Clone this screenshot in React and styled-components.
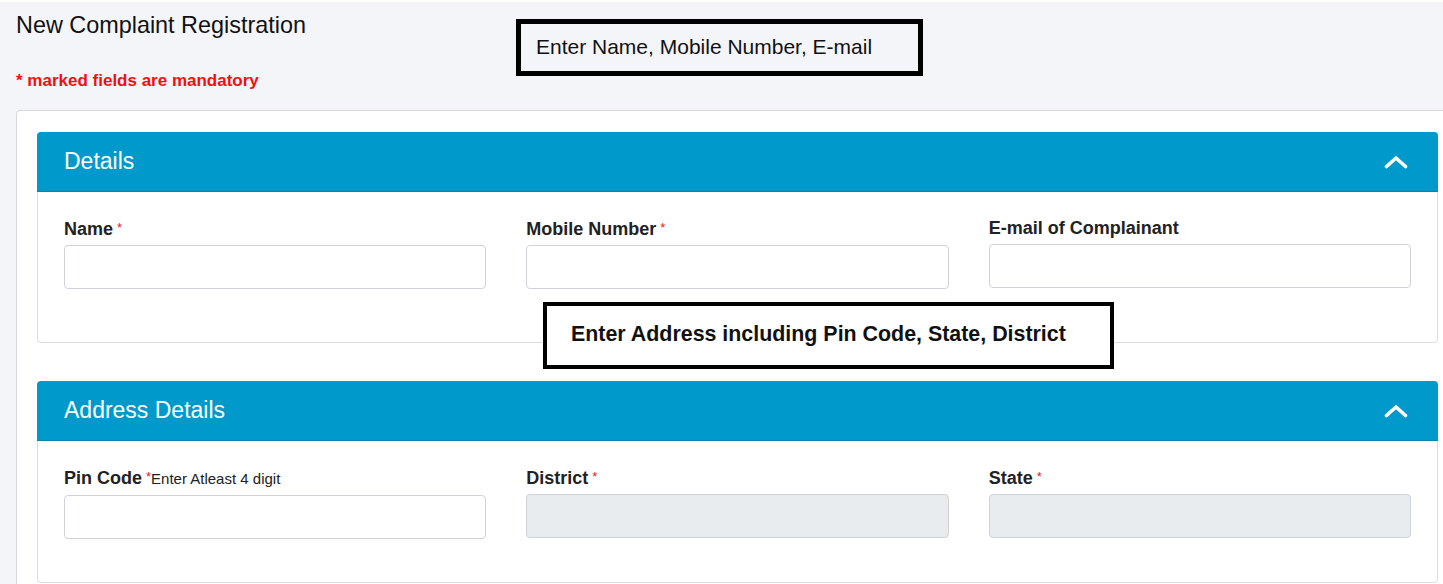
import styled, { createGlobalStyle } from "styled-components";

const GlobalStyle = createGlobalStyle`
  html, body {
    margin: 0;
    padding: 0;
    overflow: hidden;
    background: #f4f5f9;
    font-family: "Liberation Sans", Arial, sans-serif;
  }
`;

const Page = styled.div`
  position: relative;
  border-top: 2px solid #ffffff;
  padding: 10px 0 0 16px;
  height: 584px;
  overflow: hidden;
  box-sizing: border-box;
`;

const Title = styled.h1`
  margin: 0;
  font-size: 23.4px;
  line-height: 26px;
  font-weight: 400;
  color: #111111;
`;

const MandatoryNote = styled.p`
  margin: 33px 0 0;
  font-size: 17px;
  line-height: 20px;
  font-weight: 700;
  color: #ee1111;
`;

const Container = styled.div`
  margin-top: 19px;
  width: 1446px;
  background: #ffffff;
  border: 1px solid #d8d8dc;
  border-radius: 4px;
  padding: 21px 0 0 20px;
  box-sizing: border-box;
  min-height: 500px;
`;

const Card = styled.section`
  width: 1401px;
  border: 1px solid #dddddd;
  border-radius: 4px;
  background: #ffffff;
  box-sizing: border-box;
  & + & {
    margin-top: 38px;
  }
`;

const CardHeader = styled.header`
  height: 60px;
  margin: -1px -1px 0;
  padding: 0 30px 0 27px;
  background: #0099cc;
  border-bottom: 1px solid #0a84ae;
  border-radius: 4px 4px 0 0;
  display: flex;
  align-items: center;
  justify-content: space-between;
  box-sizing: border-box;
`;

const CardTitle = styled.h2`
  margin: 0;
  font-size: 23px;
  font-weight: 400;
  color: #ffffff;
`;

const CardBody = styled.div`
  padding: 26px 26px ${({ $bottom }) => $bottom}px;
  display: grid;
  grid-template-columns: repeat(3, 1fr);
  column-gap: 40px;
`;

const Field = styled.div`
  display: flex;
  flex-direction: column;
`;

const Label = styled.label`
  font-size: 18px;
  line-height: 20px;
  font-weight: 700;
  color: #222222;
  margin-bottom: 6px;
  white-space: nowrap;
`;

const Star = styled.span`
  color: #e01b1b;
  font-size: 13px;
  font-weight: 400;
  vertical-align: 3px;
  margin-left: 4px;
`;

const Hint = styled.span`
  font-size: 15px;
  font-weight: 400;
  color: #222222;
`;

const Input = styled.input`
  height: 44px;
  border: 1px solid #cfd2d6;
  border-radius: 4px;
  background: ${({ disabled }) => (disabled ? "#e9ecef" : "#ffffff")};
  box-sizing: border-box;
  padding: 0 12px;
  font-size: 16px;
  font-family: inherit;
`;

const Note = styled.div`
  position: absolute;
  box-sizing: border-box;
  border: 5px solid #000000;
  display: flex;
  align-items: center;
  color: #111111;
  font-size: 21px;
  white-space: nowrap;
`;

const TopNote = styled(Note)`
  left: 516px;
  top: 17px;
  width: 407px;
  height: 57px;
  padding-left: 15px;
  padding-bottom: 1px;
`;

const AddressNote = styled(Note)`
  left: 543px;
  top: 300px;
  width: 571px;
  height: 67px;
  padding-left: 24px;
  padding-bottom: 2px;
  background: #ffffff;
  font-weight: 700;
  font-size: 21.4px;
  border-width: 4px;
`;

const Chevron = () => (
  <svg width="24" height="14" viewBox="0 0 24 14" aria-hidden="true">
    <polyline
      points="2.5,11.5 12,3 21.5,11.5"
      fill="none"
      stroke="#ffffff"
      strokeWidth="3.6"
      strokeLinecap="round"
      strokeLinejoin="round"
    />
  </svg>
);

const FormField = ({ label, required, hint, disabled }) => (
  <Field>
    <Label>
      {label}
      {required && <Star>*</Star>}
      {hint && <Hint>{hint}</Hint>}
    </Label>
    <Input disabled={disabled} />
  </Field>
);

export default function App() {
  return (
    <>
      <GlobalStyle />
      <Page>
        <Title>New Complaint Registration</Title>
        <MandatoryNote>* marked fields are mandatory</MandatoryNote>
        <Container>
          <Card>
            <CardHeader>
              <CardTitle>Details</CardTitle>
              <Chevron />
            </CardHeader>
            <CardBody $bottom={53}>
              <FormField label="Name" required />
              <FormField label="Mobile Number" required />
              <FormField label="E-mail of Complainant" />
            </CardBody>
          </Card>
          <Card>
            <CardHeader>
              <CardTitle>Address Details</CardTitle>
              <Chevron />
            </CardHeader>
            <CardBody $bottom={43}>
              <FormField label="Pin Code" required hint="Enter Atleast 4 digit" />
              <FormField label="District" required disabled />
              <FormField label="State" required disabled />
            </CardBody>
          </Card>
        </Container>
        <TopNote>Enter Name, Mobile Number, E-mail</TopNote>
        <AddressNote>Enter Address including Pin Code, State, District</AddressNote>
      </Page>
    </>
  );
}
